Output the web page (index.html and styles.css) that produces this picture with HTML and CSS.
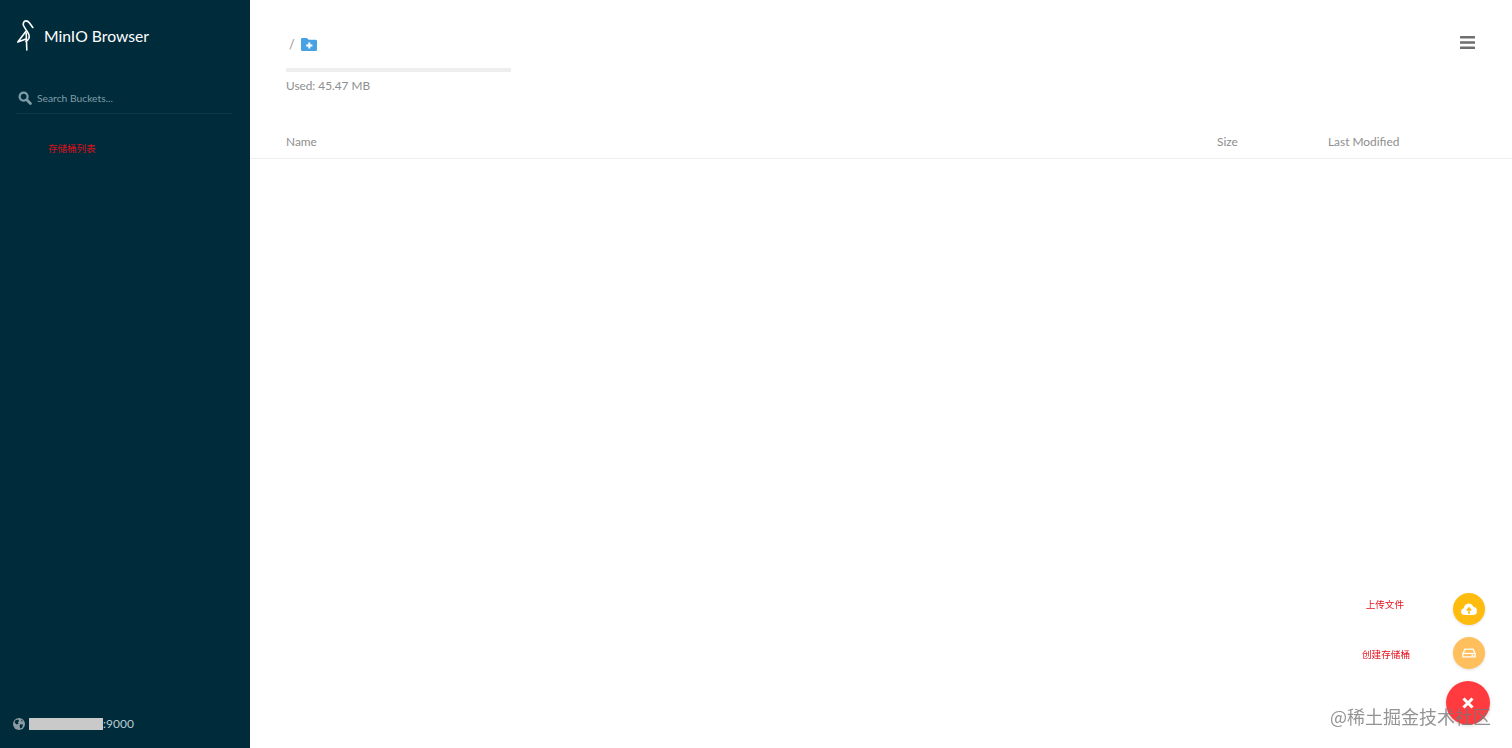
FILE: index.html
```html
<!DOCTYPE html>
<html lang="en">
<head>
  <meta charset="UTF-8">
  <title>MinIO Browser</title>
  <link rel="stylesheet" href="styles.css">
</head>
<body>
  <aside class="sidebar">
    <div class="brand">
      <svg class="brand-logo" viewBox="0 0 17 32" width="17" height="32" fill="none" stroke="#fff" stroke-width="1.6" stroke-linecap="round" stroke-linejoin="round">
        <path d="M15.8 7.5 L12.5 3 Q10.5 .4 8 1 Q5.6 2.4 6.5 5.5 Q8 8.5 10.5 12 Q13 15.5 11.8 18.5 Q10.8 20.5 9 21.2"/>
        <path d="M9.8 30 L9.2 13"/>
        <path d="M8.8 11.5 L.8 22 L9 19"/>
      </svg>
      <span class="brand-name">MinIO Browser</span>
    </div>

    <div class="search">
      <svg class="search-icon" viewBox="0 0 14 14" width="14" height="14" fill="none" stroke="#7f9ea8" stroke-linecap="round">
        <circle cx="5.6" cy="5.6" r="4" stroke-width="2.2"/>
        <path d="M8.8 8.8 L12.4 12.4" stroke-width="2.8"/>
      </svg>
      <span class="search-text">Search Buckets...</span>
    </div>

    <div class="bucket-note">存储桶列表</div>

    <div class="host">
      <svg class="host-icon" viewBox="0 0 12 12" width="12" height="12">
        <circle cx="6" cy="6" r="6" fill="#8d9ba3"/>
        <path d="M2.2 2.5 L5 1.6 L6.2 3 L4.8 4.2 L5.6 5.8 L3.6 6.4 L1.6 4.6 Z M7.2 6.2 L10 6.6 L9.2 9.6 L7.4 10.6 L6.6 8.2 Z M8 1.6 L10 3 L8.8 3.6 Z" fill="#002b3a"/>
      </svg>
      <span class="host-mask"></span><span class="host-port">:9000</span>
    </div>
  </aside>

  <main class="content">
    <header class="top">
      <div class="top-left">
        <div class="path">
          <span class="path-slash">/</span>
          <svg class="path-add" viewBox="0 0 16 13" width="16" height="13">
            <path d="M0 1.2 Q0 0 1.2 0 L6 0 L7.6 1.8 L14.8 1.8 Q16 1.8 16 3 L16 11.8 Q16 13 14.8 13 L1.2 13 Q0 13 0 11.8 Z" fill="#46a2e4"/>
            <path d="M8.3 4.4 L8.3 10.6 M5.2 7.5 L11.4 7.5" stroke="#fff" stroke-width="2"/>
          </svg>
        </div>
        <div class="usage-bar"></div>
        <div class="usage-text">Used: 45.47 MB</div>
      </div>
      <svg class="menu-icon" viewBox="0 0 15 13" width="15" height="13" fill="#6f6f6f">
        <rect y="0" width="15" height="2.6" rx=".5"/>
        <rect y="5.2" width="15" height="2.6" rx=".5"/>
        <rect y="10.4" width="15" height="2.6" rx=".5"/>
      </svg>
    </header>

    <div class="table-head">
      <span>Name</span>
      <span>Size</span>
      <span>Last Modified</span>
    </div>
  </main>

  <div class="fab-row fab-upload">
    <span class="fab-label">上传文件</span>
    <span class="fab-small fab-yellow">
      <svg viewBox="0 0 16 12" width="16" height="12">
        <path d="M4 12 Q0 12 0 8.6 Q0 5.8 2.8 5.2 Q3.6 1 7.6 .6 Q11 .6 12.2 3.8 Q16 4.4 16 8 Q16 12 12 12 Z" fill="#fff"/>
        <path d="M8 11 L8 6 M5.8 7.6 L8 5 L10.2 7.6" stroke="#ffbc0f" stroke-width="1.5" fill="none"/>
      </svg>
    </span>
  </div>
  <div class="fab-row fab-bucket">
    <span class="fab-label">创建存储桶</span>
    <span class="fab-small fab-orange">
      <svg viewBox="0 0 16 11" width="14" height="10" fill="none" stroke="#fff" stroke-width="1.5">
        <path d="M1 6 L3.4 1 L12.6 1 L15 6 L15 10 L1 10 Z"/>
        <path d="M1 6 L15 6"/>
        <path d="M11 8 L13 8"/>
      </svg>
    </span>
  </div>
  <div class="fab-main">
    <svg viewBox="0 0 12 12" width="12" height="12" stroke="#fff" stroke-width="3">
      <path d="M1.5 1.5 L10.5 10.5 M10.5 1.5 L1.5 10.5"/>
    </svg>
  </div>

  <div class="watermark">@稀土掘金技术社区</div>
</body>
</html>
```

FILE: styles.css
```css
* {
  box-sizing: border-box;
}

html, body {
  height: 100%;
}

body {
  margin: 0;
  display: flex;
  overflow: hidden;
  font-family: Lato, 'Noto Sans CJK SC', sans-serif;
  background: #fff;
  color: #8e8e8e;
}

.sidebar {
  position: relative;
  flex: 0 0 250px;
  display: flex;
  flex-direction: column;
  height: 100%;
  padding: 20px 18px 0 16px;
  background: #002b3a;
}

.brand {
  display: flex;
  align-items: center;
  gap: 10px;
  height: 32px;
  margin-left: 1px;
}

.brand-name {
  margin-top: -1px;
  color: #fff;
  font-size: 15.7px;
  line-height: 32px;
}

.search {
  display: flex;
  align-items: center;
  gap: 5px;
  height: 32px;
  margin-top: 30px;
  padding: 0 0 0 2px;
  border-bottom: 1px solid #0d3a48;
}

.search-text {
  color: #7f9ea8;
  font-size: 10.3px;
}

.bucket-note {
  margin: 26px 0 0 32px;
  color: #d5101c;
  font-size: 9.5px;
  line-height: 16px;
  font-family: 'Noto Sans CJK SC', sans-serif;
}

.host {
  display: flex;
  align-items: center;
  margin-top: auto;
  margin-bottom: 18px;
  margin-left: -3px;
  height: 12px;
  color: #b7cbd2;
  font-size: 12px;
}

.host-icon {
  margin-right: 4px;
}

.host-mask {
  width: 74px;
  height: 12px;
  background: #c9c9c9;
}

.host-port {
  margin-top: -1px;
}

.content {
  flex: 1;
  min-width: 0;
}

.top {
  display: flex;
  justify-content: space-between;
  height: 125px;
  padding: 36px 36px 0 36px;
}

.path {
  display: flex;
  align-items: center;
  gap: 6px;
  height: 17px;
  padding-left: 3px;
  font-size: 12.5px;
}

.usage-bar {
  width: 225px;
  height: 4px;
  margin-top: 15px;
  background: #eee;
}

.usage-text {
  margin-top: 6px;
  font-size: 11.8px;
  line-height: 15px;
}

.menu-icon {
  margin-right: 1px;
}

.table-head {
  display: grid;
  grid-template-columns: 931px 111px 1fr;
  height: 34px;
  padding: 9px 0 0 36px;
  border-bottom: 1px solid #eee;
  font-size: 11.9px;
  line-height: 16px;
}

/* floating buttons, on top of the page */
.fab-row {
  position: fixed;
  right: 27px;
  display: flex;
  align-items: center;
}

.fab-upload {
  top: 593px;
}

.fab-bucket {
  top: 637px;
}

.fab-label {
  color: #e8101c;
  font-size: 9.6px;
  font-family: 'Noto Sans CJK SC', sans-serif;
}

.fab-upload .fab-label {
  margin-right: 49px;
  margin-top: -10px;
}

.fab-bucket .fab-label {
  margin-right: 43px;
  margin-top: 2px;
}

.fab-small {
  display: flex;
  align-items: center;
  justify-content: center;
  width: 32px;
  height: 32px;
  border-radius: 50%;
  box-shadow: 0 1px 3px rgba(0,0,0,0.12);
}

.fab-yellow {
  background: #ffbc0f;
}

.fab-orange {
  background: #ffbf5c;
}

.fab-main {
  position: fixed;
  top: 681px;
  right: 22px;
  display: flex;
  align-items: center;
  justify-content: center;
  width: 44px;
  height: 44px;
  border-radius: 50%;
  background: #ff3b3f;
  box-shadow: 0 1px 4px rgba(0,0,0,0.15);
}

.watermark {
  position: fixed;
  top: 704px;
  right: 21px;
  color: rgba(120,120,120,0.8);
  font-size: 18px;
  line-height: 24px;
  font-family: 'Noto Sans CJK SC', sans-serif;
}
```
